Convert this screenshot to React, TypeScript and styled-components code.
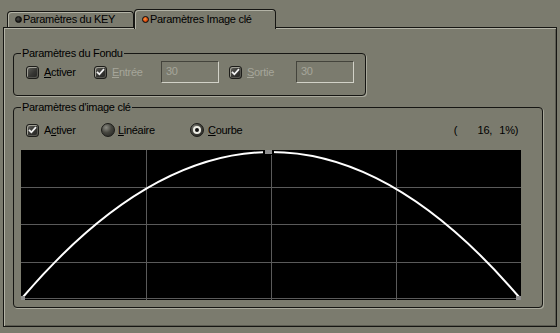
import React from "react";
import styled, { createGlobalStyle, css } from "styled-components";

const BG = "#7b7b6e";
const LINE = "#161613";
const HILITE = "#b3b3a6";
const DIM = "#a6a69a";

const GlobalStyle = createGlobalStyle`
  html, body { margin: 0; padding: 0; background: ${BG}; }
  body {
    font-family: "Liberation Sans", Arial, sans-serif;
    font-size: 11px;
    color: #000;
  }
`;

const Window = styled.div`
  width: 560px;
  height: 333px;
  box-sizing: border-box;
  padding: 9px 3px 0 3px;
  display: flex;
  flex-direction: column;
  letter-spacing: -0.3px;
`;

const TabRow = styled.div`
  position: relative;
  z-index: 2;
  display: flex;
  align-items: flex-start;
  height: 18px;
  padding-left: 4px;
`;

const Tab = styled.div<{ $active?: boolean }>`
  box-sizing: border-box;
  width: ${(p) => (p.$active ? 142 : 127)}px;
  height: ${(p) => (p.$active ? 20 : 16)}px;
  margin-top: ${(p) => (p.$active ? 0 : 2)}px;
  border: 1px solid ${LINE};
  border-bottom: none;
  border-radius: 4px 4px 0 0;
  background: ${BG};
  box-shadow: inset 1px 1px 0 ${HILITE};
  display: flex;
  align-items: ${(p) => (p.$active ? "flex-start" : "center")};
  padding-top: ${(p) => (p.$active ? 3 : 0)}px;
  padding-left: 7px;
  gap: 1px;
  white-space: nowrap;
  line-height: 13px;
`;

const Led = styled.span<{ $on?: boolean }>`
  flex: none;
  width: 7px;
  height: 7px;
  box-sizing: border-box;
  border-radius: 50%;
  margin-top: ${(p) => (p.$on ? 3 : 0)}px;
  border: 1px solid #0a0a08;
  background: ${(p) =>
    p.$on
      ? "radial-gradient(circle at 40% 40%, #ff9a40 0%, #d8480c 55%, #8a2a06 100%)"
      : "radial-gradient(circle at 40% 40%, #4a4a46 0%, #141414 75%)"};
`;

const Panel = styled.div`
  position: relative;
  z-index: 1;
  box-sizing: border-box;
  width: 554px;
  height: 300px;
  border: 1px solid ${LINE};
  box-shadow: inset 1px 1px 0 ${HILITE}, inset -1px -1px 0 #5c5c52;
  padding: 19px 0 0 9px;
  display: flex;
  flex-direction: column;
  gap: 5px;
`;

const Group = styled.fieldset<{ $w: number }>`
  box-sizing: border-box;
  width: ${(p) => p.$w}px;
  min-width: 0;
  margin: 0;
  padding: 0;
  border: 1px solid ${LINE};
  border-radius: 4px;
  box-shadow: 1px 1px 0 #a9a99c;
`;

const Legend = styled.legend`
  padding: 0 1px;
  margin-left: 7px;
  line-height: 13px;
  font-size: 11px;
`;

const Row = styled.div<{ $h: number; $pt: number; $pb: number }>`
  display: flex;
  align-items: center;
  height: ${(p) => p.$h}px;
  padding: ${(p) => p.$pt}px 24px ${(p) => p.$pb}px 12px;
`;

const Item = styled.label<{ $w?: number; $gap?: number; $dim?: boolean }>`
  flex: none;
  display: flex;
  align-items: center;
  gap: ${(p) => p.$gap ?? 5}px;
  width: ${(p) => (p.$w ? `${p.$w}px` : "auto")};
  color: ${(p) => (p.$dim ? DIM : "#000")};
  line-height: 13px;
  white-space: nowrap;
`;

const Box = styled.span`
  flex: none;
  width: 13px;
  height: 13px;
  box-sizing: border-box;
  border-radius: 3px;
  border: 1px solid #1c1c19;
  background: linear-gradient(135deg, #62625c 0%, #363633 55%, #242422 100%);
  box-shadow: inset 1px 1px 0 #a09f95, inset -1px -1px 0 #55554f;
  display: flex;
  align-items: center;
  justify-content: center;
`;

const RadioMark = styled.span<{ $on?: boolean }>`
  flex: none;
  width: 14px;
  height: 14px;
  box-sizing: border-box;
  border-radius: 50%;
  border: 1px solid #1b1b18;
  background: radial-gradient(circle at 35% 30%, #8a8a82 0%, #46463f 45%, #222220 100%);
  display: flex;
  align-items: center;
  justify-content: center;
  ${(p) =>
    p.$on &&
    css`
      &::after {
        content: "";
        display: block;
        width: 8px;
        height: 8px;
        box-sizing: border-box;
        border-radius: 50%;
        background: #101010;
        border: 2px solid #ecece4;
      }
    `}
`;

const TextBox = styled.input`
  flex: none;
  box-sizing: border-box;
  width: 58px;
  height: 22px;
  margin: 0;
  padding: 2px 0 4px 4px;
  border-style: solid;
  border-width: 1px;
  border-color: #44443c #d2d2c8 #d2d2c8 #44443c;
  background: transparent;
  font: inherit;
  letter-spacing: inherit;
  color: ${DIM};
  -webkit-text-fill-color: ${DIM};
  opacity: 1;
  outline: none;
`;

const Spacer = styled.span<{ $w: number }>`
  flex: none;
  width: ${(p) => p.$w}px;
`;

const Coord = styled.div`
  margin-left: auto;
  display: flex;
  line-height: 13px;
  white-space: nowrap;
`;

const Num = styled.span<{ $w: number }>`
  width: ${(p) => p.$w}px;
  text-align: right;
`;

const GraphWrap = styled.div`
  margin: 13px 0 7px 7px;
  width: 500px;
  height: 150px;
  svg { display: block; }
`;

const Check = ({ on }: { on?: boolean }) => (
  <Box>
    {on && (
      <svg width="9" height="8" viewBox="0 0 9 8">
        <polyline points="1,3.8 3.4,6.3 8,1.2" fill="none" stroke="#f2f2f2" strokeWidth="1.8" />
      </svg>
    )}
  </Box>
);

const Graph = () => {
  const grid = "#5a5a5a";
  return (
    <GraphWrap>
      <svg width="500" height="150" viewBox="0 0 500 150">
        <rect width="500" height="150" fill="#000" />
        {[125.5, 250.5, 375.5].map((x) => (
          <line key={x} x1={x} y1={0} x2={x} y2={150} stroke={grid} strokeWidth="1" />
        ))}
        {[37.5, 74.5, 112.5, 148.5].map((y) => (
          <line key={y} x1={0} y1={y} x2={500} y2={y} stroke={grid} strokeWidth="1" />
        ))}
        <path d="M2,147 Q126,2 250,2 Q374,2 498,147" fill="none" stroke="#ffffff" strokeWidth="2" />
        <rect x="242" y="0" width="11" height="5" fill="#000" />
        <rect x="244" y="0" width="7" height="4" fill="#8e8e8e" />
        <rect x="0" y="146" width="4" height="4" fill="#8e8e8e" />
        <rect x="495" y="146" width="5" height="4" fill="#8e8e8e" />
      </svg>
    </GraphWrap>
  );
};

export default function App() {
  return (
    <>
      <GlobalStyle />
      <Window>
        <TabRow>
          <Tab>
            <Led />
            <span>Paramètres du KEY</span>
          </Tab>
          <Tab $active>
            <Led $on />
            <span>Paramètres Image clé</span>
          </Tab>
        </TabRow>
        <Panel>
          <Group $w={353}>
            <Legend>Paramètres du Fondu</Legend>
            <Row $h={22} $pt={1} $pb={12}>
              <Item $w={68}>
                <Check />
                <span>
                  <u>A</u>ctiver
                </span>
              </Item>
              <Item $w={67} $dim>
                <Check on />
                <span>
                  <u>E</u>ntrée
                </span>
              </Item>
              <TextBox disabled value="30" readOnly />
              <Spacer $w={10} />
              <Item $w={67} $dim>
                <Check on />
                <span>
                  <u>S</u>ortie
                </span>
              </Item>
              <TextBox disabled value="30" readOnly />
            </Row>
          </Group>
          <Group $w={530}>
            <Legend>Paramètres d'image clé</Legend>
            <Row $h={14} $pt={9} $pb={0}>
              <Item $w={75}>
                <Check on />
                <span>
                  A<u>c</u>tiver
                </span>
              </Item>
              <Item $w={89} $gap={3}>
                <RadioMark />
                <span>
                  <u>L</u>inéaire
                </span>
              </Item>
              <Item $gap={4}>
                <RadioMark $on />
                <span>
                  <u>C</u>ourbe
                </span>
              </Item>
              <Coord>
                <span>(</span>
                <Num $w={35}>16,</Num>
                <Num $w={26}>1%)</Num>
              </Coord>
            </Row>
            <Graph />
          </Group>
        </Panel>
      </Window>
    </>
  );
}
